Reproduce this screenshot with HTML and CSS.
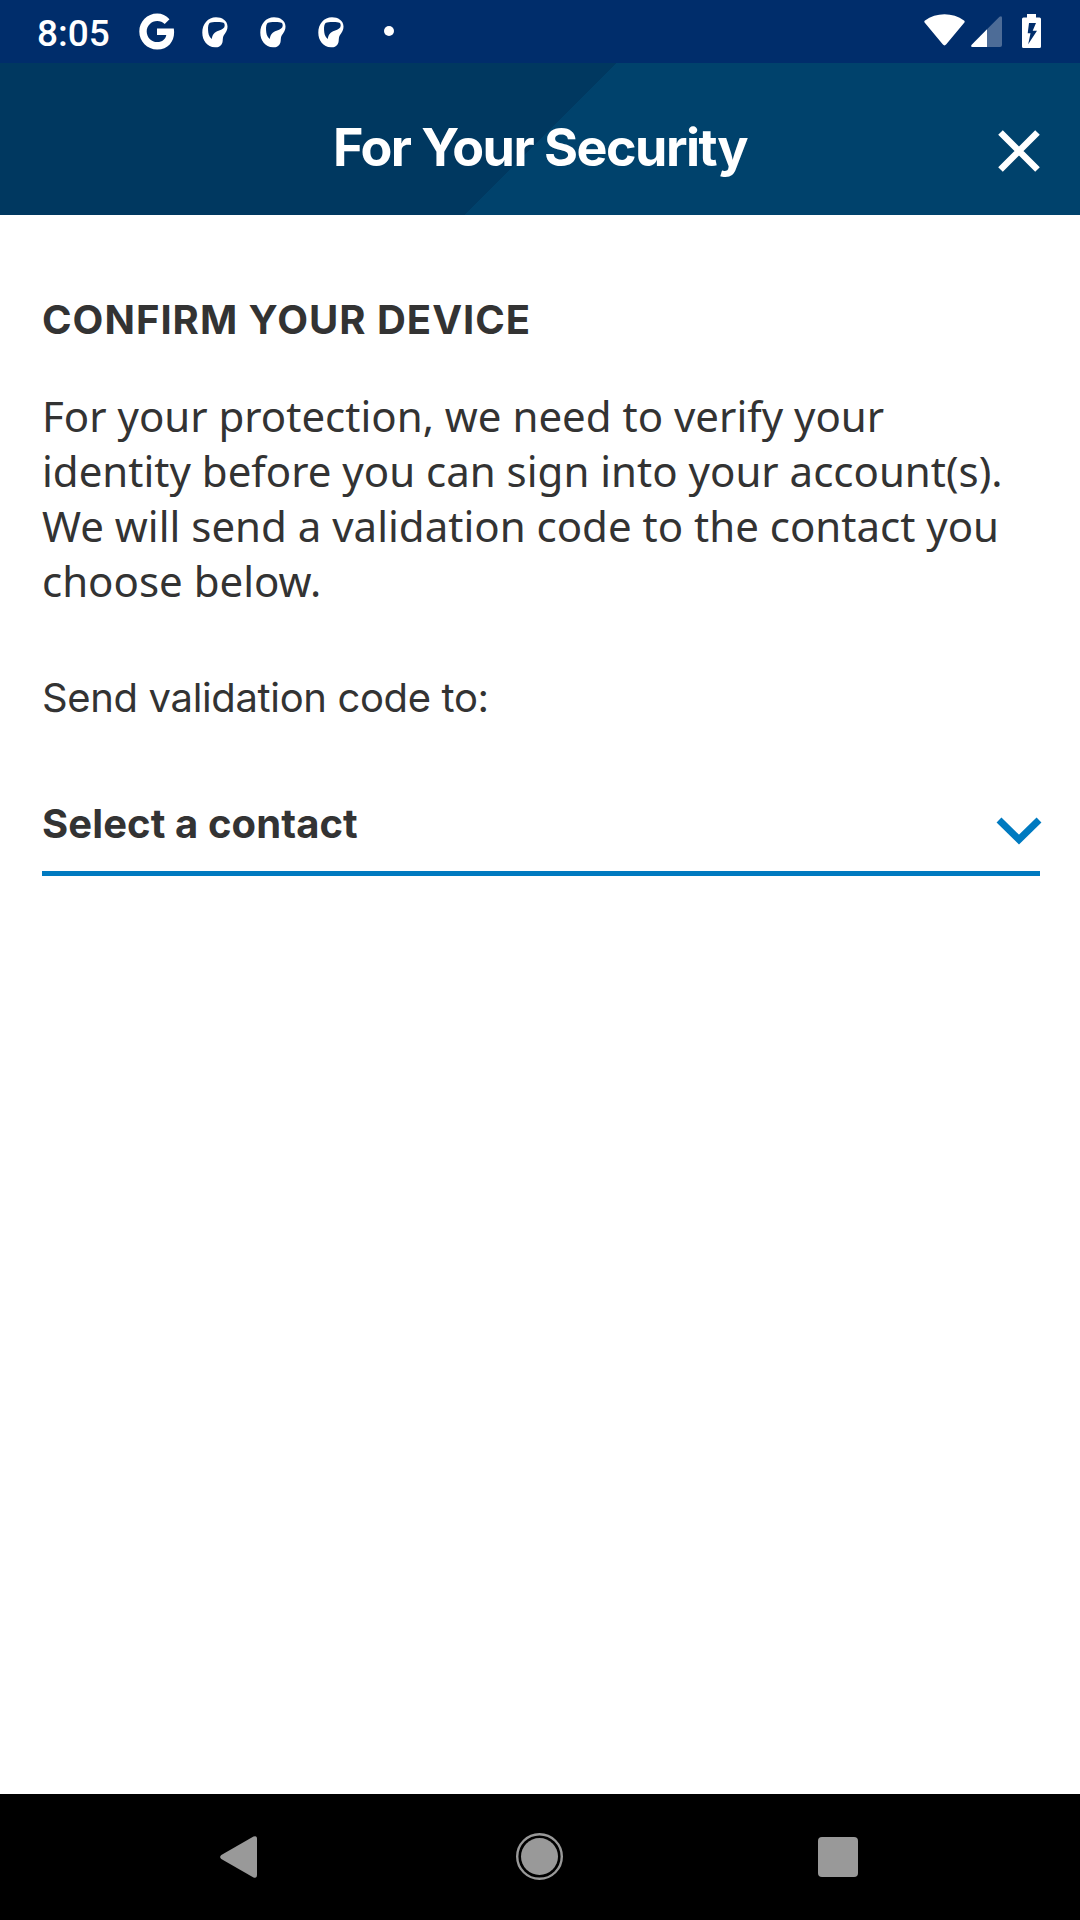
FILE: index.html
```html
<!DOCTYPE html>
<html lang="en">
<head>
<meta charset="utf-8">
<title>For Your Security</title>
<link rel="stylesheet" href="styles.css">
</head>
<body>
<svg class="defs" width="0" height="0" aria-hidden="true">
  <symbol id="swirl" viewBox="0 0 26 31">
    <path fill-rule="evenodd" d="M14 .2C20 .2 25.500 3.500 25.500 9.500C25.500 15 21.800 17 21 20.500C20.500 23 21.200 25 19.500 27.500C18 29.800 15.500 30.500 13 30.300C5 30 .3 23.500.3 15.500C.3 7 6 .2 14 .2ZM7.500 6C5.500 8.500 6 12 6.300 15.500C6.600 18.500 8 20.500 9.800 22C10.300 18 12.500 14.800 16.500 13.800C20.500 12.500 22.700 11 22.700 8.500C22.700 6.500 22 5.400 20.500 5.400C17 5.100 11 4.600 7.500 6Z"/>
  </symbol>
</svg>
<div class="screen">
  <div class="status-bar">
    <span class="clock">8:05</span>
    <div class="notifications">
      <svg class="google" viewBox="0 0 36 37"><path d="M30.500 6.200L25.700 11C23.700 9 21.200 7.900 18.200 7.900C12.300 7.900 7.700 12.700 7.700 18.500C7.700 24.300 12.300 29.100 18.200 29.100C23.500 29.100 26.500 26.200 27.300 22H18V15.500H34.800C36.600 26.500 30.500 36.500 18.200 36.500C8.200 36.500.3 28.500.3 18.500C.3 8.500 8.200.5 18.200.5C23 .5 27.200 2.500 30.500 6.200Z"/></svg>
      <svg class="swirl"><use href="#swirl"/></svg>
      <svg class="swirl"><use href="#swirl"/></svg>
      <svg class="swirl"><use href="#swirl"/></svg>
      <span class="dot"></span>
    </div>
    <div class="system">
      <svg class="wifi" viewBox="0 0 41 32"><path d="M.8 8.800Q-.3 7.600 1 6.600C12-1.800 29-1.800 40 6.600Q41.300 7.600 40.200 8.800L22.300 30.300Q20.500 32.500 18.700 30.300Z"/></svg>
      <svg class="signal" viewBox="0 0 31 31"><path opacity=".3" d="M28.500.8Q31-1 31 2V29Q31 31 29 31H16V13.300Z"/><path d="M16 13.300V31H1.500Q-.8 31 .7 28.800Z"/></svg>
      <svg class="battery" viewBox="0 0 19 34"><path fill-rule="evenodd" d="M5 0H14V3.500H17.500Q19 3.500 19 5V32.500Q19 34 17.500 34H1.500Q0 34 0 32.500V5Q0 3.500 1.500 3.500H5ZM7 9L5.700 19.300H8.500L6.200 30.300L15 16.800H10.700L14 9Z"/></svg>
    </div>
  </div>
  <header class="app-bar">
    <h1 class="title">For Your Security</h1>
    <svg class="close" viewBox="0 0 42 42"><path d="M2.500 2.500L39.500 39.500M39.500 2.500L2.500 39.500"/></svg>
  </header>
  <main class="content">
    <h2 class="heading">CONFIRM YOUR DEVICE</h2>
    <p class="message">For your protection, we need to verify your identity before you can sign into your account(s). We will send a validation code to the contact you choose below.</p>
    <p class="label">Send validation code to:</p>
    <div class="select">
      <span class="select-text">Select a contact</span>
      <svg class="chevron" viewBox="0 0 46 29"><path d="M3 3L23 22.500L43 3"/></svg>
    </div>
  </main>
  <nav class="nav-bar">
    <svg class="back" viewBox="0 0 37 42"><path d="M33.500.6Q37-1 37 3V39Q37 43 33.500 41.400L1.300 23Q-1 21 1.300 19Z"/></svg>
    <svg class="home" viewBox="0 0 47 47"><circle cx="23.500" cy="23.500" r="22.300" fill="none" stroke="#999" stroke-width="2.400"/><circle cx="23.500" cy="23.500" r="18.500"/></svg>
    <span class="recent"></span>
  </nav>
</div>
</body>
</html>
```
FILE: styles.css
```css
* { box-sizing: border-box; margin: 0; padding: 0; }
body { background: #fff; color: #333; }
svg { display: block; }
.defs { position: absolute; }
.screen { width: 1080px; height: 1920px; display: flex; flex-direction: column; overflow: hidden; }

.status-bar { height: 63px; background: #002d6b; display: flex; align-items: flex-start; padding: 0 39px 0 37px; }
.status-bar svg { fill: #fff; }
.clock { width: 101px; font: 500 37px/44px Roboto, sans-serif; color: #fff; padding-top: 12px; }
.notifications { display: flex; align-items: flex-start; }
.google { width: 36px; height: 37px; margin: 13px 27px 0 1px; }
.swirl { width: 26px; height: 31px; margin: 17px 32px 0 0; }
.dot { width: 10px; height: 10px; border-radius: 50%; background: #fff; margin: 26px 0 0 8px; }
.system { display: flex; margin-left: auto; }
.wifi { width: 41px; height: 32px; margin: 14px 6px 0 0; }
.signal { width: 31px; height: 31px; margin: 16px 20px 0 0; }
.battery { width: 19px; height: 34px; margin-top: 14px; }

.app-bar { height: 152px; display: grid; grid-template-columns: 42px 1fr 42px; align-items: start; padding: 0 40px; background: linear-gradient(-45deg, #00426c 50%, #003860 50%) 0 0 / 1081px 152px; }
.title { grid-column: 2; font: 700 52px/64px Inter, sans-serif; letter-spacing: -1.5px; color: #fff; text-align: center; white-space: nowrap; padding-top: 53px; }
.close { width: 42px; height: 42px; margin-top: 67px; fill: none; stroke: #fff; stroke-width: 6.500; }

.content { flex: 1; padding: 80px 37px 0 42px; }
.heading { font: 700 40px/50px Inter, sans-serif; letter-spacing: 1px; white-space: nowrap; }
.message { font: 400 42px/55px "Noto Sans", sans-serif; margin-top: 43px; }
.label { font: 400 40px/50px Inter, sans-serif; letter-spacing: -0.35px; margin-top: 65px; }
.select { display: flex; justify-content: space-between; height: 77px; margin-top: 76px; background: linear-gradient(#007ac0, #007ac0) 0 bottom / 998px 5px no-repeat; }
.select-text { font: 700 40px/50px Inter, sans-serif; letter-spacing: 0.1px; }
.chevron { width: 46px; height: 29px; margin: 18px 1px 0 0; fill: none; stroke: #007ac0; stroke-width: 7; }

.nav-bar { height: 126px; background: #000; display: flex; align-items: flex-start; padding: 0 222px 0 220px; fill: #999; }
.back { width: 37px; height: 42px; margin-top: 42px; }
.home { width: 47px; height: 47px; margin: 39px 0 0 259px; }
.recent { width: 40px; height: 40px; margin: 43px 0 0 auto; border-radius: 4px; background: #999; }
```
